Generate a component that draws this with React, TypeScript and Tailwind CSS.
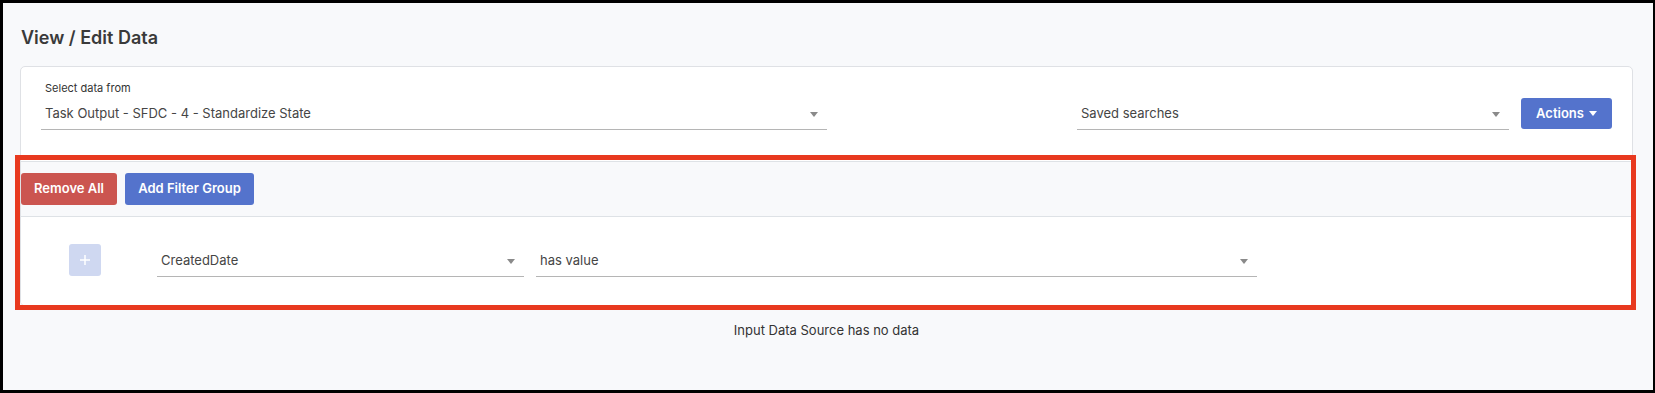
import React from "react";

function Caret({ className = "" }: { className?: string }) {
	return (
		<svg width="8" height="5" viewBox="0 0 8 5" className={className}>
			<path d="M0 0 L8 0 L4 5 Z" fill="currentColor" />
		</svg>
	);
}

function SelectBox({ value, width }: { value: string; width: number }) {
	return (
		<div
			className="h-[32px] flex items-center justify-between border-b border-[#b5b5b5] pl-[4px] pr-[9px] pt-[1px]"
			style={{ width }}
		>
			<span className="text-[13px] text-[#454545]">{value}</span>
			<Caret className="text-[#8a8a8a] mt-[1px]" />
		</div>
	);
}

export default function App() {
	return (
		<div
			className="relative w-[1655px] h-[393px] bg-[#f8f9fb] border-t-[3px] border-l-[3px] border-r-[2px] border-b-[3px] border-black pl-[17px] pr-[20px] pt-[23px]"
			style={{ fontFamily: "Inter, 'Noto Sans', sans-serif" }}
		>
			{/* TITLE */}
			<h1 className="text-[18px] leading-[24px] font-semibold text-[#3a3a3a] pl-[1px]">
				View / Edit Data
			</h1>

			{/* CARD */}
			<div className="mt-[16px] bg-white border border-[#dfe1e5] rounded-[5px] overflow-hidden">
				<div className="flex items-end pt-[14px] pb-[31px] pl-[20px] pr-[20px]">
					<div className="flex flex-col">
						<span className="text-[11px] leading-[14px] text-[#333] pl-[4px] mb-[3px]">
							Select data from
						</span>
						<SelectBox value="Task Output - SFDC - 4 - Standardize State" width={786} />
					</div>
					<div className="flex-1" />
					<SelectBox value="Saved searches" width={432} />
					<button className="ml-[12px] h-[31px] w-[91px] mb-[1px] rounded-[3px] bg-[#5473cc] text-white text-[13px] font-semibold flex items-center justify-center gap-[5px]">
						Actions
						<Caret className="text-white" />
					</button>
				</div>

				{/* FILTERS */}
				<div className="border-t border-[#dee2e6] bg-[#f8f9fb]">
					<div className="flex gap-[8px] pt-[11px] pb-[11px]">
						<button className="h-[32px] w-[96px] rounded-[3px] bg-[#cb5550] text-white text-[13px] font-semibold">
							Remove All
						</button>
						<button className="h-[32px] w-[129px] rounded-[3px] bg-[#5473cc] text-white text-[13px] font-semibold">
							Add Filter Group
						</button>
					</div>
					<div className="bg-white border-t border-[#dee2e6] flex items-end pt-[27px] pb-[28px] pl-[48px]">
						<div className="w-[32px] h-[32px] rounded-[3px] bg-[#cfd8f1] flex items-center justify-center mb-[1px]">
							<svg width="12" height="12" viewBox="0 0 12 12">
								<path d="M6 1 V11 M1 6 H11" stroke="white" strokeWidth="1.5" />
							</svg>
						</div>
						<div className="ml-[56px]">
							<SelectBox value="CreatedDate" width={367} />
						</div>
						<div className="ml-[12px]">
							<SelectBox value="has value" width={721} />
						</div>
					</div>
				</div>
			</div>

			<p className="mt-[14px] text-center text-[13px] leading-[20px] text-[#333]">
				Input Data Source has no data
			</p>

			{/* ANNOTATION */}
			<div className="absolute left-[12px] top-[152px] w-[1621px] h-[155px] border-[5px] border-[#e8391f] pointer-events-none" />
		</div>
	);
}
